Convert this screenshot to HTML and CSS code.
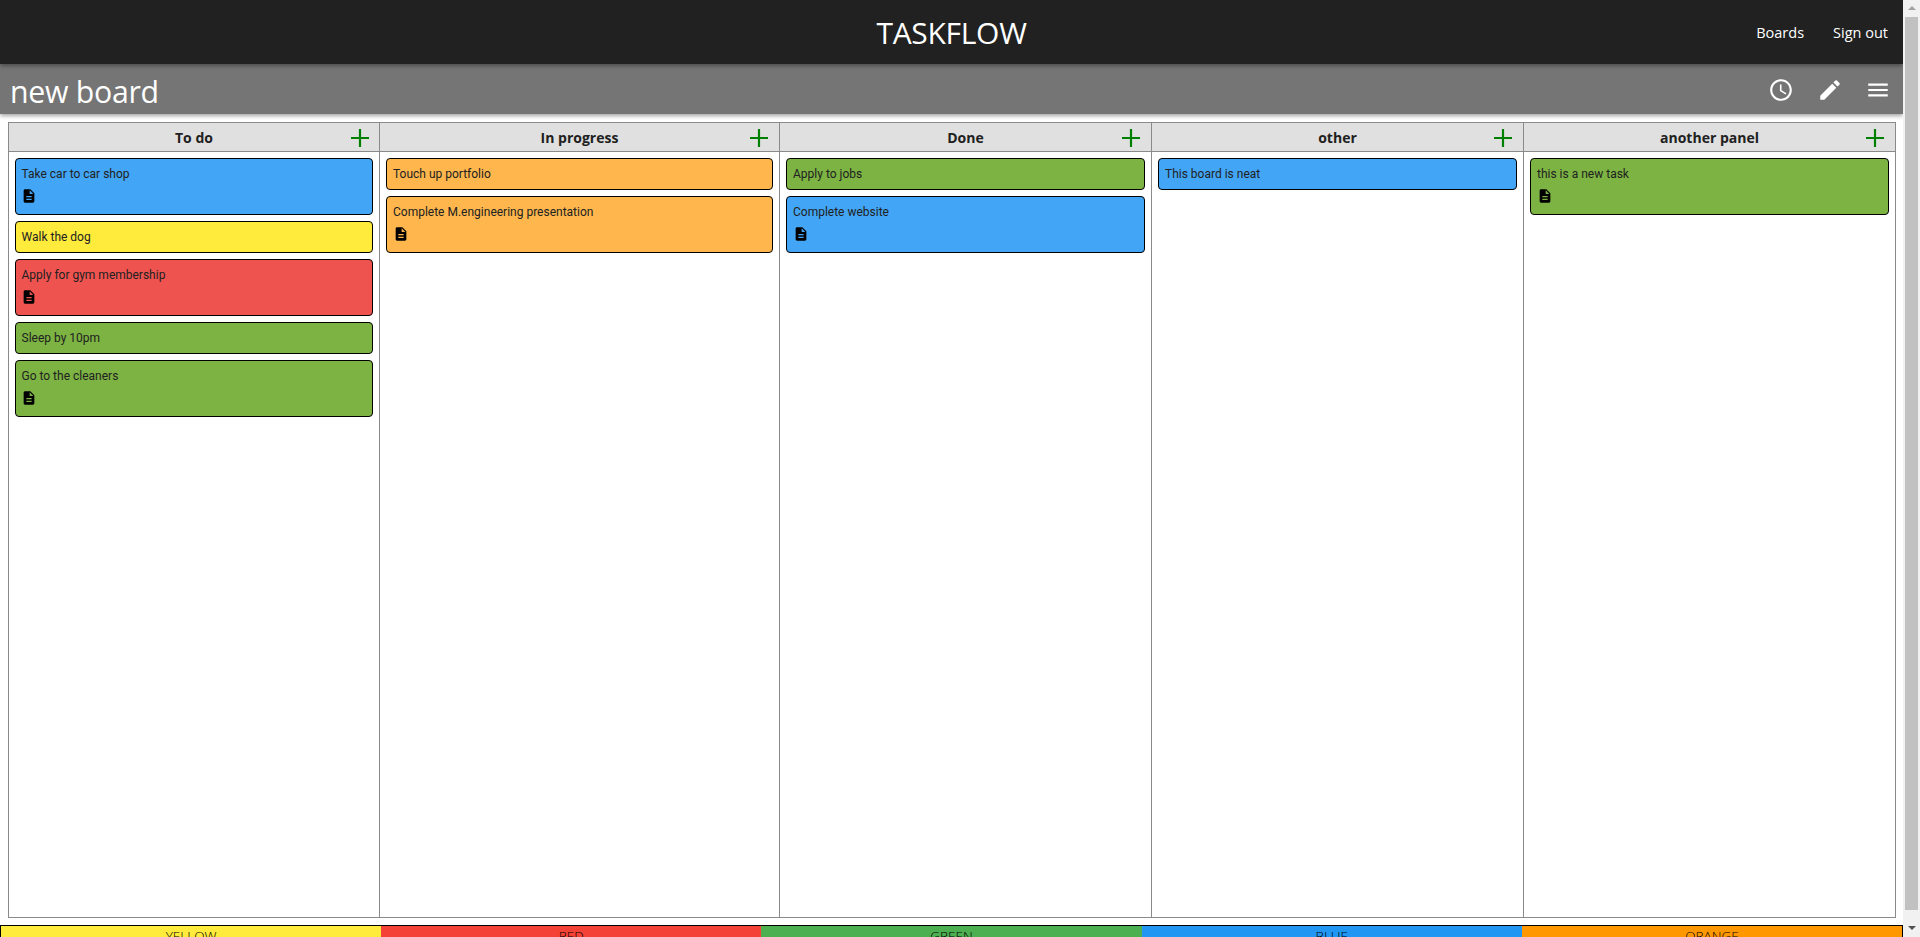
FILE: index.html
```html
<!DOCTYPE html>
<html lang="en">
<head>
<meta charset="utf-8">
<title>Taskflow</title>
<link rel="stylesheet" href="styles.css">
</head>
<body>
<div class="page">
  <header class="navbar">
    <div class="brand">TASKFLOW</div>
    <nav class="nav-links"><a>Boards</a><a>Sign out</a></nav>
  </header>
  <section class="boardbar">
    <h1 class="board-name">new board</h1>
    <div class="board-tools">
      <svg class="tool" viewBox="0 0 24 24"><path d="M11.99 2C6.47 2 2 6.48 2 12s4.47 10 9.99 10C17.52 22 22 17.52 22 12S17.52 2 11.99 2zM12 20c-4.42 0-8-3.58-8-8s3.58-8 8-8 8 3.58 8 8-3.58 8-8 8zm.5-13H11v6l5.25 3.15.75-1.23-4.5-2.67z"/></svg>
      <svg class="tool" viewBox="0 0 24 24"><path d="M3 17.25V21h3.75L17.81 9.94l-3.75-3.75L3 17.25zM20.71 7.04a1 1 0 0 0 0-1.41l-2.34-2.34a1 1 0 0 0-1.41 0l-1.83 1.83 3.75 3.75 1.83-1.83z"/></svg>
      <svg class="tool" viewBox="0 0 24 24"><path d="M3 18h18v-2H3v2zm0-5h18v-2H3v2zm0-7v2h18V6H3z"/></svg>
    </div>
  </section>
  <main class="board">
    <section class="col col-a">
      <div class="col-head"><span class="col-title">To do</span><svg class="add" viewBox="0 0 18 18"><path d="M9 0v18M0 9h18"/></svg></div>
      <div class="col-body">
        <article class="card blue"><div class="card-text">Take car to car shop</div><svg class="doc" viewBox="0 0 24 24"><path d="M14 2H6c-1.1 0-2 .9-2 2v16c0 1.1.9 2 2 2h12c1.1 0 2-.9 2-2V8l-6-6zm2 16H8v-2h8v2zm0-4H8v-2h8v2zm-3-5V3.5L18.5 9H13z"/></svg></article>
        <article class="card yellow"><div class="card-text">Walk the dog</div></article>
        <article class="card red"><div class="card-text">Apply for gym membership</div><svg class="doc" viewBox="0 0 24 24"><path d="M14 2H6c-1.1 0-2 .9-2 2v16c0 1.1.9 2 2 2h12c1.1 0 2-.9 2-2V8l-6-6zm2 16H8v-2h8v2zm0-4H8v-2h8v2zm-3-5V3.5L18.5 9H13z"/></svg></article>
        <article class="card green"><div class="card-text">Sleep by 10pm</div></article>
        <article class="card green"><div class="card-text">Go to the cleaners</div><svg class="doc" viewBox="0 0 24 24"><path d="M14 2H6c-1.1 0-2 .9-2 2v16c0 1.1.9 2 2 2h12c1.1 0 2-.9 2-2V8l-6-6zm2 16H8v-2h8v2zm0-4H8v-2h8v2zm-3-5V3.5L18.5 9H13z"/></svg></article>
      </div>
    </section>
    <section class="col col-b">
      <div class="col-head"><span class="col-title">In progress</span><svg class="add" viewBox="0 0 18 18"><path d="M9 0v18M0 9h18"/></svg></div>
      <div class="col-body">
        <article class="card orange"><div class="card-text">Touch up portfolio</div></article>
        <article class="card orange"><div class="card-text">Complete M.engineering presentation</div><svg class="doc" viewBox="0 0 24 24"><path d="M14 2H6c-1.1 0-2 .9-2 2v16c0 1.1.9 2 2 2h12c1.1 0 2-.9 2-2V8l-6-6zm2 16H8v-2h8v2zm0-4H8v-2h8v2zm-3-5V3.5L18.5 9H13z"/></svg></article>
      </div>
    </section>
    <section class="col col-c">
      <div class="col-head"><span class="col-title">Done</span><svg class="add" viewBox="0 0 18 18"><path d="M9 0v18M0 9h18"/></svg></div>
      <div class="col-body">
        <article class="card green"><div class="card-text">Apply to jobs</div></article>
        <article class="card blue"><div class="card-text">Complete website</div><svg class="doc" viewBox="0 0 24 24"><path d="M14 2H6c-1.1 0-2 .9-2 2v16c0 1.1.9 2 2 2h12c1.1 0 2-.9 2-2V8l-6-6zm2 16H8v-2h8v2zm0-4H8v-2h8v2zm-3-5V3.5L18.5 9H13z"/></svg></article>
      </div>
    </section>
    <section class="col col-c">
      <div class="col-head"><span class="col-title">other</span><svg class="add" viewBox="0 0 18 18"><path d="M9 0v18M0 9h18"/></svg></div>
      <div class="col-body">
        <article class="card blue"><div class="card-text">This board is neat</div></article>
      </div>
    </section>
    <section class="col col-c col-last">
      <div class="col-head"><span class="col-title">another panel</span><svg class="add" viewBox="0 0 18 18"><path d="M9 0v18M0 9h18"/></svg></div>
      <div class="col-body">
        <article class="card green"><div class="card-text">this is a new task</div><svg class="doc" viewBox="0 0 24 24"><path d="M14 2H6c-1.1 0-2 .9-2 2v16c0 1.1.9 2 2 2h12c1.1 0 2-.9 2-2V8l-6-6zm2 16H8v-2h8v2zm0-4H8v-2h8v2zm-3-5V3.5L18.5 9H13z"/></svg></article>
      </div>
    </section>
  </main>
  <footer class="legend">
    <div class="swatch s-yellow">YELLOW</div>
    <div class="swatch s-red">RED</div>
    <div class="swatch s-green">GREEN</div>
    <div class="swatch s-blue">BLUE</div>
    <div class="swatch s-orange">ORANGE</div>
  </footer>
</div>
<div class="scrollbar">
  <div class="sb-up"></div>
  <div class="sb-track"><div class="sb-thumb"></div></div>
  <div class="sb-down"></div>
</div>
</body>
</html>
```
FILE: styles.css
```css
* { box-sizing: border-box; }
html, body { margin: 0; height: 937px; overflow: hidden; }
body { display: flex; background: #fff; font-family: "Open Sans", sans-serif; color: #212121; }
.page { width: 1903px; height: 937px; overflow: hidden; flex: none; }
.navbar { height: 64px; background: #212121; color: #fff; display: flex; align-items: center; justify-content: center; position: relative; z-index: 1; box-shadow: 0 2px 4px rgba(0,0,0,.35); }
.brand { font-size: 30px; line-height: 64px; padding-top: 2px; letter-spacing: -0.3px; }
.nav-links { position: absolute; right: 0; top: 0; display: flex; height: 64px; align-items: center; font-size: 14.5px; gap: 29px; padding-right: 15px; padding-top: 1px; }
.boardbar { height: 50px; background: #757575; color: #fff; display: flex; align-items: center; justify-content: space-between; padding: 0 12px 0 10px; box-shadow: 0 2px 4px rgba(0,0,0,.35); position: relative; }
.board-name { margin: 0; font-size: 30.3px; font-weight: 400; line-height: 50px; padding-top: 5px; letter-spacing: -0.3px; }
.board-tools { display: flex; gap: 22.5px; padding-top: 1px; }
.tool { width: 26px; height: 26px; fill: #fff; display: block; }
.board { display: flex; margin: 8px 0 0 8px; width: 1888px; height: 796px; border: 1px solid #8a8a8a; }
.col { display: flex; flex-direction: column; border-right: 1px solid #8a8a8a; flex: none; }
.col-a { width: 371px; }
.col-b { width: 400px; }
.col-c { width: 372px; }
.col-last { flex: 1; border-right: 0; }
.col-head { height: 29px; background: #e0e0e0; border-bottom: 1px solid #8a8a8a; display: flex; align-items: center; justify-content: center; position: relative; flex: none; }
.col-title { font-size: 14px; font-weight: 700; color: #212121; }
.add { position: absolute; right: 11px; top: 6px; width: 18px; height: 18px; fill: none; stroke: #008000; stroke-width: 2.2; }
.col-a .add { right: 10px; }
.col-body { padding: 6px 6px; display: flex; flex-direction: column; gap: 6px; }
.card { border: 1px solid #000; border-radius: 4px; padding: 8px 6px 0; color: #212121; font-family: Roboto, sans-serif; font-size: 12px; line-height: 14px; height: 32px; }
.col-a .card { padding-left: 5.5px; }
.card:has(.doc) { height: 57px; }
.doc { display: block; width: 16px; height: 16px; margin: 6.7px 0 0 -0.5px; fill: #000; }
.blue { background: #42a5f5; }
.yellow { background: #ffeb3b; }
.red { background: #ef5350; }
.green { background: #7cb342; }
.orange { background: #ffb74d; }
.legend { display: flex; height: 40px; margin-top: 7px; border: 1px solid #000; font-size: 13.5px; font-weight: 300; font-family: "Open Sans", sans-serif; color: #000; }
.swatch { flex: 1; text-align: center; padding-top: 1px; }
.s-yellow { background: #ffeb3b; }
.s-red { background: #f44336; }
.s-green { background: #4caf50; }
.s-blue { background: #2196f3; }
.s-orange { background: #ff9800; }
.scrollbar { width: 17px; height: 937px; background: #f1f1f1; display: flex; flex-direction: column; flex: none; }
.sb-up, .sb-down { height: 17px; flex: none; position: relative; }
.sb-up::after, .sb-down::after { content: ""; position: absolute; left: 5px; width: 0; height: 0; border-left: 4px solid transparent; border-right: 4px solid transparent; }
.sb-up::after { top: 6px; border-bottom: 4px solid #a3a3a3; }
.sb-down::after { top: 6px; border-top: 4px solid #505050; }
.sb-track { flex: 1; padding: 0 2px; }
.sb-thumb { height: 893px; background: #c1c1c1; }
```
